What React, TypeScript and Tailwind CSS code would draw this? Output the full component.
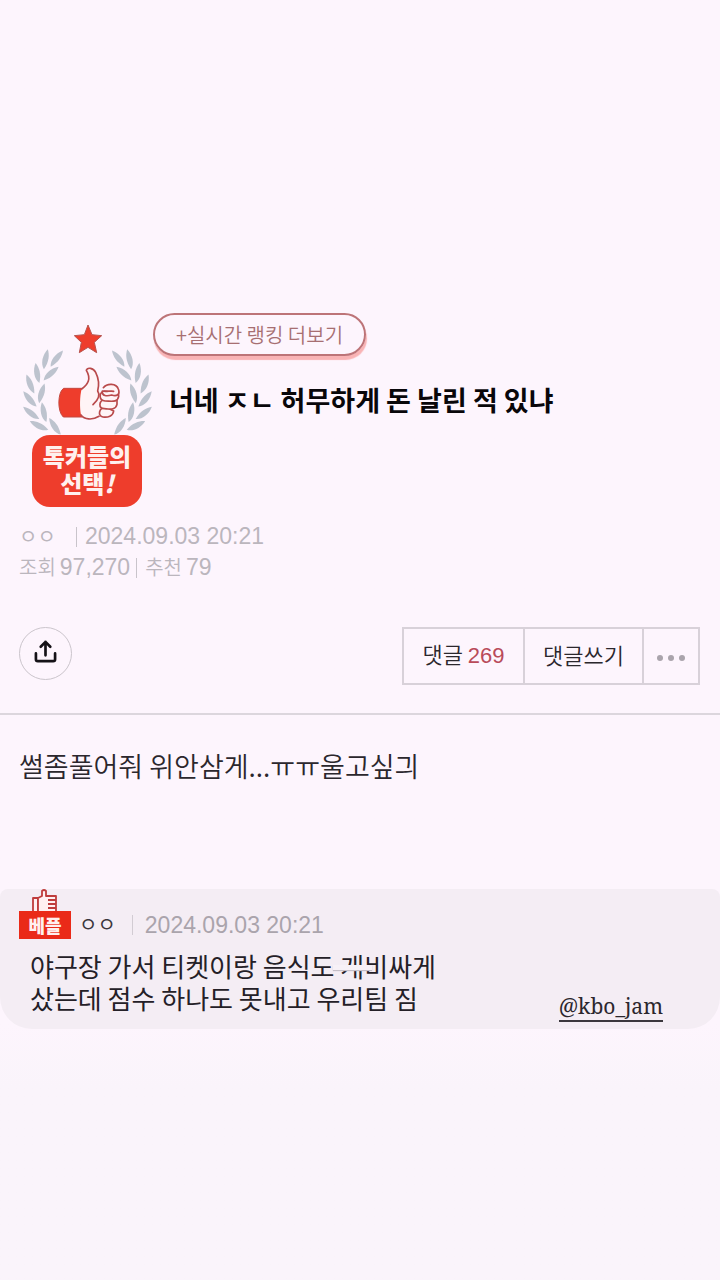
const leaves = [
  { x: 103, y: 151, r: 14 },
  { x: 78, y: 193, r: -8 },
  { x: 57, y: 226, r: -20 },
  { x: 56, y: 271, r: -38 },
  { x: 60, y: 313, r: -50 },
  { x: 84, y: 351, r: -62 },
  { x: 136, y: 148, r: 40 },
  { x: 119, y: 193, r: 50 },
  { x: 91, y: 253, r: 18 },
  { x: 98, y: 310, r: -10 },
  { x: 131, y: 353, r: -32 },
];

function Branch() {
  return (
    <g fill="#bdc3ce">
      {leaves.map((leaf) => (
        <path
          key={`${leaf.x}-${leaf.y}`}
          d="M0 -31 C9 -16 13 4 3 30 C-11 16 -12 -10 0 -31Z"
          transform={`translate(${leaf.x} ${leaf.y}) rotate(${leaf.r})`}
        />
      ))}
    </g>
  );
}

function Laurel() {
  return (
    <svg viewBox="30 36 396 345" className="h-[115px] w-[132px]" aria-hidden="true">
      <Branch />
      <g transform="translate(459 0) scale(-1 1)">
        <Branch />
      </g>
      <path
        d="M231 48 L243 77 L272 80 L250 100 L257 131 L231 115 L205 131 L211 100 L190 80 L220 77Z"
        fill="#ee3d2c"
        stroke="#b6544f"
        strokeWidth="3"
      />
      <path d="M212 238 H158 C140 248 138 308 157 324 H214Z" fill="#ee3d2c" stroke="#c4483f" strokeWidth="3" />
      <path
        d="M212 240 C230 226 242 210 226 184 C229 174 247 176 254 190 C264 210 264 224 260 246 L274 246 L280 318 C268 322 258 332 238 331 C224 330 216 326 210 318 C206 296 206 262 212 240Z"
        fill="#fff4f6"
      />
      <g fill="#fff4f6" stroke="#b94a4b" strokeWidth="5" strokeLinecap="round" strokeLinejoin="round">
        <path
          d="M212 240 C230 226 242 210 226 184 C229 174 247 176 254 190 C264 210 266 224 260 246 C270 260 258 276 246 287 M210 318 C220 332 244 334 264 322"
          fill="none"
        />
        <path d="M284 294 C262 298 260 320 276 324 C290 326 306 322 308 306Z" />
        <path d="M282 270 C262 276 262 298 280 299 C296 300 314 304 318 286 L318 274Z" />
        <path d="M280 246 C262 252 264 274 282 276 C300 276 320 282 323 262 L322 250Z" />
        <path d="M277 236 C288 222 316 222 322 240 C328 256 318 264 302 258 C288 262 272 262 274 246 C286 250 298 244 308 247" />
      </g>
    </svg>
  );
}

function BestThumb() {
  return (
    <svg viewBox="0 0 26 22" className="h-[22px] w-[26px]" aria-hidden="true">
      <g fill="#fff0f1" stroke="#bf3c3c" strokeWidth="1.8" strokeLinejoin="round">
        <path d="M1 22 V9 H6 V22" />
        <path d="M6 22 V9 L10 7 V2 Q12 0 14 2 V7 H24 V22" />
        <path d="M16 11 H24 M16 15 H24 M16 19 H24" />
      </g>
    </svg>
  );
}

export default function App() {
  return (
    <main className="min-h-screen bg-linear-to-b from-[#fdf5fd] from-80% to-[#faf4fb] to-85% pt-[313px] font-['Liberation_Sans','Noto_Sans_CJK_KR',sans-serif] text-[#2b272d]">
      <header className="pr-5 pl-[19px]">
        <div className="flex items-start">
          <div className="flex w-[134px] shrink-0 flex-col items-center pt-2 pl-0.5">
            <Laurel />
            <div className="-mt-px flex h-[72px] w-[110px] flex-col items-center justify-center rounded-[18px] bg-[#ee3d2c] pb-1 font-['Noto_Sans_CJK_KR',sans-serif] text-2xl leading-[27px] font-black text-[#fff0ee]">
              <span>톡커들의</span>
              <span>
                선택<i>!</i>
              </span>
            </div>
          </div>
          <div className="min-w-0 flex-1">
            <button
              type="button"
              className="h-[43px] w-[213px] rounded-full border-2 border-[#bd7478] font-['Noto_Sans_CJK_KR',sans-serif] text-xl leading-none font-[350] text-[#a76f72] shadow-[1px_4px_1px_#f9b3b5]"
            >
              +실시간 랭킹 더보기
            </button>
            <h1 className="mt-6 ml-4 font-['Noto_Sans_CJK_KR',sans-serif] text-[27px] leading-10 font-bold text-[#09070a]">
              너네 ㅈㄴ 허무하게 돈 날린 적 있냐
            </h1>
          </div>
        </div>

        <div className="mt-[14px] text-[23px] leading-[31px] text-[#bbb6bd]">
          <p className="flex items-center">
            <span className="w-14 text-xl">ㅇㅇ</span>
            <span className="mr-2 ml-px h-5 w-px bg-[#c9c4cb]" />
            <time>2024.09.03 20:21</time>
          </p>
          <p className="flex items-center">
            <span className="mr-1 text-xl font-[350]">조회</span>
            <span>97,270</span>
            <span className="mr-2 ml-1.5 h-5 w-px bg-[#c9c4cb]" />
            <span className="mr-1 text-xl font-[350]">추천</span>
            <span>79</span>
          </p>
        </div>

        <div className="mt-11 flex items-start justify-between">
          <button
            type="button"
            aria-label="공유"
            className="flex size-[53px] items-center justify-center rounded-full border border-[#cbc5cc]"
          >
            <svg viewBox="0 0 24 24" className="mb-1 size-[23px]" fill="none" stroke="#151217" strokeWidth="2.8" strokeLinecap="round" strokeLinejoin="round">
              <path d="M12 16 V2 M7 7 L12 2 L17 7 M2 14 V20 Q2 22 4 22 H20 Q22 22 22 20 V14" />
            </svg>
          </button>
          <div className="flex h-[58px] divide-x-2 divide-[#d8d1d9] border-2 border-[#d8d1d9] font-['Noto_Sans_CJK_KR',sans-serif] text-[22px] leading-none font-[350]">
            <button type="button" className="w-[121px] pb-1">
              댓글 <span className="font-['Liberation_Sans'] text-[#b94b5a]">269</span>
            </button>
            <button type="button" className="w-[119px] pb-1">
              댓글쓰기
            </button>
            <button type="button" aria-label="더보기" className="flex w-[54px] items-center justify-center gap-[5px] pt-1">
              <span className="size-[6px] rounded-full bg-[#aaa4ac]" />
              <span className="size-[6px] rounded-full bg-[#aaa4ac]" />
              <span className="size-[6px] rounded-full bg-[#aaa4ac]" />
            </button>
          </div>
        </div>
      </header>

      <article className="mt-7 border-t-2 border-[#dcd6dd] pt-[31px] pr-5 pb-[103px] pl-[19px] font-['Noto_Sans_CJK_KR',sans-serif] text-[27px] leading-10 font-[350]">
        썰좀풀어줘 위안삼게...ㅠㅠ울고싶긔
      </article>

      <section className="h-[140px] rounded-t-lg rounded-b-[32px] bg-[#f4edf4] pr-5 pl-[19px]">
        <div className="flex items-end">
          <div className="flex w-[52px] flex-col items-center">
            <BestThumb />
            <strong className="flex h-7 w-full items-center justify-center bg-[#ea2a18] font-['Noto_Sans_CJK_KR',sans-serif] text-lg leading-none font-black text-[#fff0ee]">
              베플
            </strong>
          </div>
          <div className="flex h-7 items-center text-[23px] leading-none text-[#aaa4ac]">
            <span className="ml-2 text-xl text-[#3b373d]">ㅇㅇ</span>
            <span className="mr-3 ml-4 h-5 w-px bg-[#d2ccd3]" />
            <time>2024.09.03 20:21</time>
          </div>
        </div>
        <div className="flex items-end justify-between pr-[37px] pl-[11px]">
          <p className="relative mt-[11px] pb-2 font-['Noto_Sans_CJK_KR',sans-serif] text-[26px] leading-8 text-[#242027]">
            야구장 가서 티켓이랑 음식도 개비싸게
            <br />
            샀는데 점수 하나도 못내고 우리팀 짐
            <span className="absolute top-[15px] right-[64px] h-[5px] w-[39px] bg-[#f7f1f7] shadow-[0_1px_1px_#c5bec7]" />
          </p>
          <a href="#kbo_jam" className="border-b-2 border-[#3b373d] font-['Noto_Serif','Liberation_Serif',serif] text-[21px] leading-7">
            @kbo_jam
          </a>
        </div>
      </section>
    </main>
  );
}
